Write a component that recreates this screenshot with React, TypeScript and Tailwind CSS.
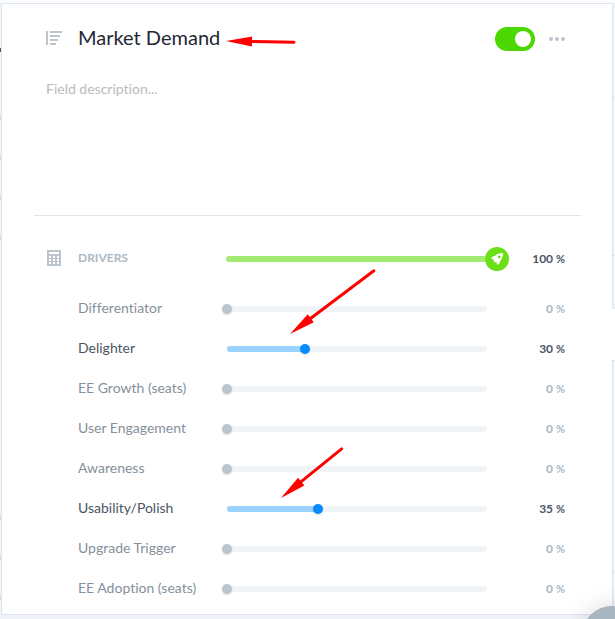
import { useState } from "react";

const FONT = "font-['Lato','Open_Sans',sans-serif] [font-variant-ligatures:none]";

type Driver = { name: string; weight: number };

const initialDrivers: Driver[] = [
  { name: "Differentiator", weight: 0 },
  { name: "Delighter", weight: 30 },
  { name: "EE Growth (seats)", weight: 0 },
  { name: "User Engagement", weight: 0 },
  { name: "Awareness", weight: 0 },
  { name: "Usability/Polish", weight: 35 },
  { name: "Upgrade Trigger", weight: 0 },
  { name: "EE Adoption (seats)", weight: 0 },
];

function FieldIcon() {
  return (
    <svg width="16" height="14" viewBox="0 0 16 14" fill="#bcc5ce" aria-hidden="true">
      <path d="M0 0h2v14H0zM4 0h12v2H4zM4 4h10v2H4zM4 8h8v2H4zM4 12h6v2H4z" />
    </svg>
  );
}

function CalculatorIcon() {
  return (
    <svg width="16" height="16" viewBox="-1 0 16 16" fill="#bcc5ce" aria-hidden="true">
      <path
        fillRule="evenodd"
        d="M0 0h14v16H0zM2 2v2h10V2zM2 6v2h2V6zM6 6v2h2V6zM10 6v2h2V6zM2 9v2h2V9zM6 9v2h2V9zM10 9v2h2V9zM2 12v2h2v-2zM6 12v2h2v-2zM10 12v2h2v-2z"
      />
    </svg>
  );
}

function RocketIcon() {
  return (
    <svg width="12" height="12" viewBox="0 0 12 12" fill="#fff" aria-hidden="true">
      <path
        fillRule="evenodd"
        d="M12 0C8.800 0 6 .9 4 2.900L2 3.200 0 6l2.600.3 0 1.700 1.300 1.300 1.800 0L6 12l2.800-2 .3-2C11.200 6 12 3.200 12 0zM8.200 2.500a1.400 1.400 0 1 1 0 2.800 1.400 1.400 0 0 1 0-2.800z"
      />
    </svg>
  );
}

function Percentage({ value, active, htmlFor }: { value: number; active: boolean; htmlFor?: string }) {
  return (
    <output
      htmlFor={htmlFor}
      className={
        "w-[73px] shrink-0 text-right text-xs font-bold " + (active ? "text-[#4b5663]" : "text-[#acb8c3]")
      }
    >
      {value} <span className="text-[11px]">%</span>
    </output>
  );
}

function DriverRow({ driver, onChange }: { driver: Driver; onChange: (weight: number) => void }) {
  const active = driver.weight > 0;
  const id = "driver-" + driver.name.toLowerCase().replace(/[^a-z]+/g, "-");
  return (
    <li className="flex h-10 items-center">
      <label
        htmlFor={id}
        className={"w-36 shrink-0 pb-0.5 text-sm " + (active ? "text-[#4b5663]" : "text-[#84919d]")}
      >
        {driver.name}
      </label>
      <div className="relative flex h-10 min-w-0 flex-1 items-center px-[5px]">
        <div className="h-1.5 w-full rounded-full bg-[#f0f4f8]">
          <div className="h-1.5 rounded-full bg-[#9bd2ff]" style={{ width: driver.weight + "%" }} />
        </div>
        <input
          id={id}
          type="range"
          min={0}
          max={100}
          value={driver.weight}
          onChange={(e) => onChange(Number(e.target.value))}
          className={
            "absolute inset-x-0 m-0 h-2.5 appearance-none bg-transparent [&::-webkit-slider-thumb]:size-2.5 [&::-webkit-slider-thumb]:appearance-none [&::-webkit-slider-thumb]:rounded-full [&::-webkit-slider-thumb]:shadow-sm " +
            (active
              ? "[&::-webkit-slider-thumb]:bg-[#068cff]"
              : "[&::-webkit-slider-thumb]:bg-[#bcc5ce]")
          }
        />
      </div>
      <Percentage value={driver.weight} active={active} htmlFor={id} />
    </li>
  );
}

function Arrow({ className, angle, length }: { className: string; angle: number; length: number }) {
  return (
    <svg className={"pointer-events-none absolute overflow-visible " + className} width="1" height="1" aria-hidden="true">
      <g transform={"rotate(" + angle + ")"} fill="#f00">
        <path d="M0 0L26-5V5z" />
        <path d={"M24 0H" + length} stroke="#f00" strokeWidth="3" strokeLinecap="round" />
      </g>
    </svg>
  );
}

// Slivers of the board that stay visible beside the open card.
function BoardEdges() {
  return (
    <div aria-hidden="true">
      <div className="absolute top-12 left-0 h-1 w-px bg-[#4b5663]" />
      <div className="absolute top-[116px] left-0 h-1 w-px bg-[#d3dae1]" />
      <div className="absolute top-[156px] left-0 h-1 w-px bg-[#d3dae1]" />
      <div className="absolute top-[196px] left-0 h-1 w-px bg-[#d3dae1]" />
      <div className="absolute top-[236px] left-0 h-1 w-px bg-[#d3dae1]" />
      <div className="absolute top-[516px] left-0 h-1 w-px bg-[#d3dae1]" />
      <div className="absolute top-[556px] left-0 h-1 w-px bg-[#d3dae1]" />
      <div className="absolute top-[596px] left-0 h-1 w-px bg-[#d3dae1]" />
      <div className="absolute top-[97px] right-0 h-px w-0.5 bg-[#dfe5ec]" />
      <div className="absolute top-[255px] right-0 h-px w-0.5 bg-[#dfe5ec]" />
      <div className="absolute top-[308px] right-0 h-[53px] w-[3px] border-y border-[#dfe5ec] bg-white" />
      <div className="absolute top-[571px] right-0 h-px w-0.5 bg-[#dfe5ec]" />
    </div>
  );
}

export default function App() {
  const [drivers, setDrivers] = useState(initialDrivers);
  const [enabled, setEnabled] = useState(true);

  return (
    <div
      className={
        "relative min-h-screen overflow-hidden border-t-3 border-[#fbfcfd] bg-[#f0f4f8] pr-0.5 pl-px " + FONT
      }
    >
      <main className="border border-[#dfe5ec] bg-white pr-[31px] pb-[5px] pl-8">
        <header className="flex items-center pt-[19px] pr-4 pl-3">
          <div className="w-8 shrink-0 pb-0.5">
            <FieldIcon />
          </div>
          <h1 className="flex-1 pb-1 text-xl leading-7 text-[#1f2833]">Market Demand</h1>
          <label className="relative h-6 w-10 cursor-pointer">
            <input
              type="checkbox"
              role="switch"
              aria-label="Enable field"
              checked={enabled}
              onChange={(e) => setEnabled(e.target.checked)}
              className="peer block h-6 w-10 appearance-none rounded-full bg-[#bcc5ce] checked:bg-[#4bd700]"
            />
            <span className="absolute top-1 left-1 size-4 rounded-full bg-white peer-checked:left-5" />
          </label>
          <button type="button" aria-label="More options" className="ml-3.5 flex w-4 gap-0.5">
            <span className="size-1 rounded-full bg-[#bcc5ce]" />
            <span className="size-1 rounded-full bg-[#bcc5ce]" />
            <span className="size-1 rounded-full bg-[#bcc5ce]" />
          </button>
        </header>
        <textarea
          aria-label="Field description"
          placeholder="Field description..."
          className="mt-6 ml-3 block h-[136px] w-11/12 resize-none text-sm text-[#4b5663] placeholder:text-[#bbbbbb]"
        />
        <section className="border-t border-[#dfe5ec] pt-[23px] pr-4 pl-3">
          <div className="flex h-10 items-center">
            <div className="w-8 shrink-0 pb-0.5">
              <CalculatorIcon />
            </div>
            <h2 className="w-[148px] shrink-0 pb-0.5 text-xs font-bold text-[#acb8c3]">DRIVERS</h2>
            <div className="-mr-[17px] flex min-w-0 flex-1 items-center">
              <div className="h-1.5 flex-1 rounded-l-full bg-[#a2ea73]" />
              <div className="flex size-6 items-center justify-center rounded-full bg-[#6bdf17]">
                <RocketIcon />
              </div>
            </div>
            <Percentage value={100} active />
          </div>
          <ul className="mt-2.5 pl-8">
            {drivers.map((driver, i) => (
              <DriverRow
                key={driver.name}
                driver={driver}
                onChange={(weight) => setDrivers(drivers.map((d, j) => (j === i ? { ...d, weight } : d)))}
              />
            ))}
          </ul>
        </section>
      </main>

      <div className="pointer-events-none absolute inset-x-0 -top-[3px]">
        <BoardEdges />
        <Arrow className="top-[41px] left-[226px]" angle={1} length={68} />
        <Arrow className="top-[334px] left-[290px]" angle={-37} length={105} />
        <Arrow className="top-[498px] left-[281px]" angle={-39} length={78} />
      </div>
      <button
        type="button"
        aria-label="Help"
        className="absolute top-[603px] left-[582px] size-15 rounded-full bg-[#a8b4be] shadow-[0_0_24px_rgba(0,0,0,0.15)]"
      />
    </div>
  );
}
